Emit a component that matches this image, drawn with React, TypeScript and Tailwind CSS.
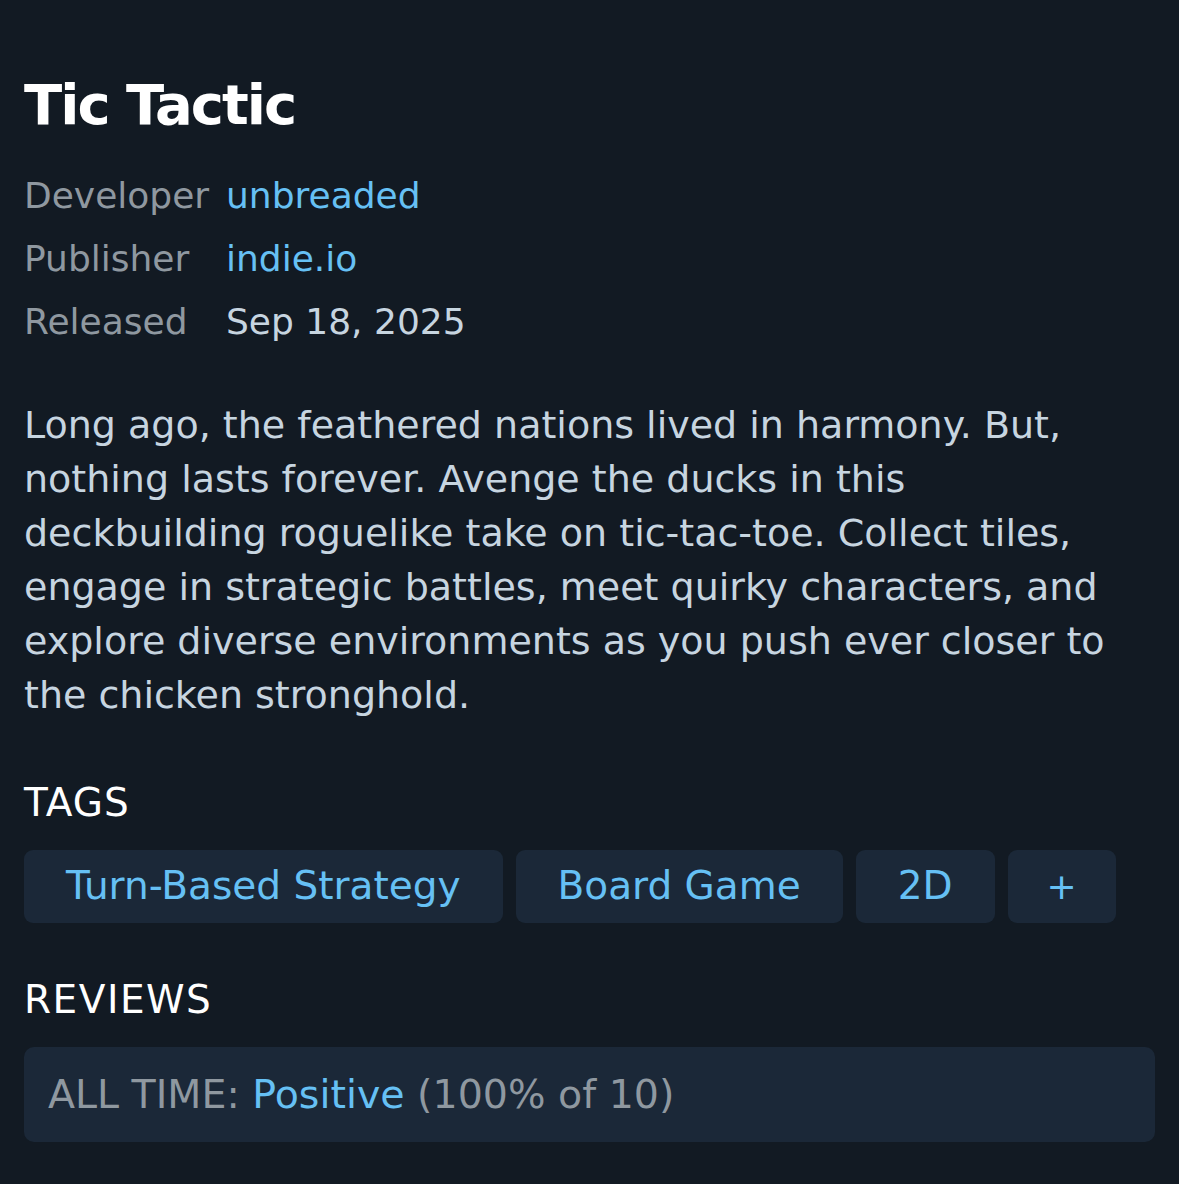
import * as React from 'react';

const tags = ['Turn-Based Strategy', 'Board Game', '2D'];

const MetaRow: React.FC<{ label: string; children: React.ReactNode }> = ({ label, children }) => {
	return (
		<div className="flex items-baseline">
			<span className="w-[202px] shrink-0 text-[#8f98a0]">{label}</span>
			<span>{children}</span>
		</div>
	);
};

export default function App() {
	return (
		<div
			className="min-h-[1184px] w-full bg-[#121a23] px-6 pt-[67px] pb-10"
			style={{ fontFamily: '"DejaVu Sans", "Noto Sans", sans-serif' }}
		>
			<h1 className="text-[56px] font-bold leading-[76px] tracking-[-2px] text-white">Tic Tactic</h1>

			<div className="mt-[21px] flex flex-col text-[36px] leading-[63px]">
				<MetaRow label="Developer">
					<span className="text-[#66c0f4]">unbreaded</span>
				</MetaRow>
				<MetaRow label="Publisher">
					<span className="text-[#66c0f4]">indie.io</span>
				</MetaRow>
				<MetaRow label="Released">
					<span className="text-[#c7d5e0]">Sep 18, 2025</span>
				</MetaRow>
			</div>

			<p className="mt-[45px] text-[38px] leading-[54px] text-[#c7d5e0]">
				Long ago, the feathered nations lived in harmony. But,
				<br />
				nothing lasts forever. Avenge the ducks in this
				<br />
				deckbuilding roguelike take on tic-tac-toe. Collect tiles,
				<br />
				engage in strategic battles, meet quirky characters, and
				<br />
				explore diverse environments as you push ever closer to
				<br />
				the chicken stronghold.
			</p>

			<h2 className="mt-[54px] text-[39px] leading-[54px] tracking-[1px] text-white">TAGS</h2>
			<div className="mt-[20px] flex flex-wrap gap-[13px]">
				{tags.map(tag => (
					<span
						key={tag}
						className="flex h-[73px] items-center rounded-[9px] bg-[#1b2838] px-[42px] text-[39px] text-[#66c0f4]"
					>
						{tag}
					</span>
				))}
				<span className="flex h-[73px] w-[108px] items-center justify-center rounded-[9px] bg-[#1b2838] text-[36px] text-[#66c0f4]">
					+
				</span>
			</div>

			<h2 className="mt-[50px] text-[39px] leading-[54px] tracking-[1.5px] text-white">REVIEWS</h2>
			<div className="mt-[20px] flex h-[95px] items-center rounded-[10px] bg-[#1b2838] px-6 text-[39.5px] text-[#8f98a0]">
				<span>
					ALL TIME: <span className="text-[#66c0f4]">Positive</span> (100% of 10)
				</span>
			</div>
		</div>
	);
}
